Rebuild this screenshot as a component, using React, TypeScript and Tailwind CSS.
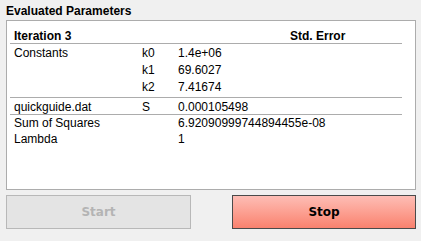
import React from "react";

type Row = { label?: string; key?: string; value?: string };

const sections: { rows: Row[]; box: string; row: string }[] = [
  {
    box: "border-b border-[#acacac] py-[1px]",
    row: "h-[17px] leading-[17px]",
    rows: [
      { label: "Constants", key: "k0", value: "1.4e+06" },
      { key: "k1", value: "69.6027" },
      { key: "k2", value: "7.41674" },
    ],
  },
  {
    box: "border-b border-[#acacac]",
    row: "h-[16px] leading-[18px]",
    rows: [{ label: "quickguide.dat", key: "S", value: "0.000105498" }],
  },
  {
    box: "",
    row: "h-[16px] leading-[17px]",
    rows: [
      { label: "Sum of Squares", value: "6.92090999744894455e-08" },
      { label: "Lambda", value: "1" },
    ],
  },
];

const cols = "grid grid-cols-[128px_36px_112px_1fr]";

function TableRow({ row, cls }: { row: Row; cls: string }) {
  return (
    <div className={`${cols} ${cls} items-start`}>
      <div className="pl-1">{row.label}</div>
      <div className="pl-1">{row.key}</div>
      <div className="col-span-2 whitespace-nowrap pl-1">{row.value}</div>
    </div>
  );
}

export default function App() {
  return (
    <div className="h-[241px] w-[421px] bg-[#f0f0f0] pl-[6px] pr-[5px] pt-[3px] font-['Liberation_Sans',Arial,sans-serif] text-[12px] text-black">
      <div className="h-[17px] leading-[17px] font-bold">Evaluated Parameters</div>
      <div className="h-[170px] border border-[#acacac] bg-white px-[3px] pt-[6px]">
        <div className="w-[392px]">
          <div className={`${cols} h-[17px] items-center border-b border-[#acacac] font-bold`}>
            <div className="pl-1">Iteration 3</div>
            <div />
            <div />
            <div className="pl-1">Std. Error</div>
          </div>
          {sections.map((s, i) => (
            <div key={i} className={s.box}>
              {s.rows.map((row, j) => (
                <TableRow key={j} row={row} cls={s.row} />
              ))}
            </div>
          ))}
        </div>
      </div>
      <div className="mt-[5px] flex justify-between font-['DejaVu_Sans',sans-serif] text-[12px] font-bold">
        <button className="h-[34px] w-[185px] border border-[#b8b8b8] bg-[#e4e4e4] text-[#b4b4b4]">
          Start
        </button>
        <button className="h-[34px] w-[184px] border border-[#4a4a4a] bg-gradient-to-b from-[#fdbdb5] to-[#f9816e] text-black">
          Stop
        </button>
      </div>
    </div>
  );
}
